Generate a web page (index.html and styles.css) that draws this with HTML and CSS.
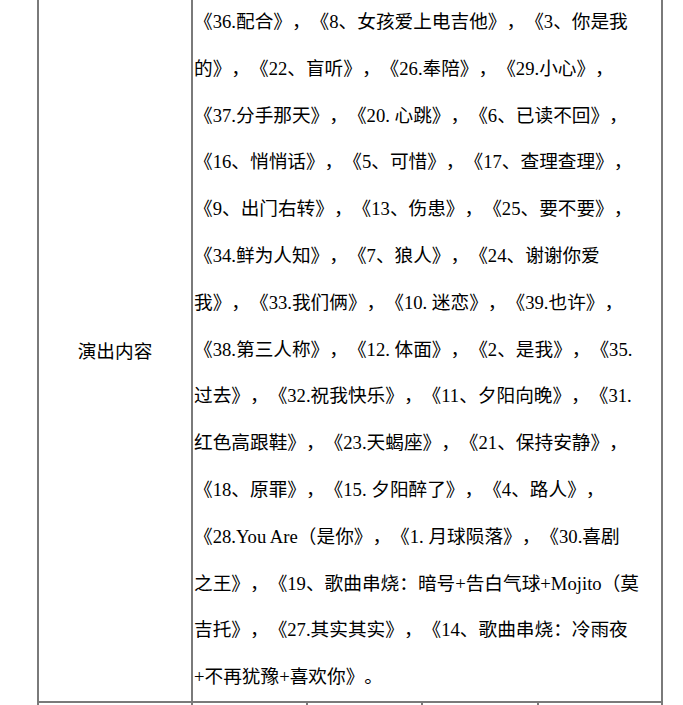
FILE: index.html
```html
<!DOCTYPE html>
<html lang="zh-CN">
<head>
<meta charset="utf-8">
<title>演出内容</title>
<link rel="stylesheet" href="styles.css">
</head>
<body>
<table class="sheet">
  <colgroup>
    <col class="c1"><col class="c2"><col class="c3"><col class="c4"><col class="c5">
  </colgroup>
  <tr>
    <td class="label">演出内容</td>
    <td class="content" colspan="4">
      <div class="ln">《36.配合》，《8、女孩爱上电吉他》，《3、你是我</div>
      <div class="ln">的》，《22、盲听》，《26.奉陪》，《29.小心》，</div>
      <div class="ln">《37.分手那天》，《20. 心跳》，《6、已读不回》，</div>
      <div class="ln">《16、悄悄话》，《5、可惜》，《17、查理查理》，</div>
      <div class="ln">《9、出门右转》，《13、伤患》，《25、要不要》，</div>
      <div class="ln">《34.鲜为人知》，《7、狼人》，《24、谢谢你爱</div>
      <div class="ln">我》，《33.我们俩》，《10. 迷恋》，《39.也许》，</div>
      <div class="ln">《38.第三人称》，《12. 体面》，《2、是我》，《35.</div>
      <div class="ln">过去》，《32.祝我快乐》，《11、夕阳向晚》，《31.</div>
      <div class="ln">红色高跟鞋》，《23.天蝎座》，《21、保持安静》，</div>
      <div class="ln">《18、原罪》，《15. 夕阳醉了》，《4、路人》，</div>
      <div class="ln">《28.You Are（是你》，《1. 月球陨落》，《30.喜剧</div>
      <div class="ln">之王》，《19、歌曲串烧：暗号+告白气球+Mojito（莫</div>
      <div class="ln">吉托》，《27.其实其实》，《14、歌曲串烧：冷雨夜</div>
      <div class="ln">+不再犹豫+喜欢你》。</div>
    </td>
  </tr>
  <tr class="next">
    <td></td><td></td><td></td><td></td><td></td>
  </tr>
</table>
</body>
</html>
```
FILE: styles.css
```css
html, body {
  margin: 0;
  padding: 0;
  background: #ffffff;
}
body {
  font-family: "Liberation Serif", "Noto Sans CJK SC", serif;
  font-size: 18.67px;
  color: #000000;
  overflow: hidden;
  text-spacing-trim: space-all;
}
.sheet {
  border-collapse: collapse;
  table-layout: fixed;
  width: 624px;
  margin: -3px 0 0 37px;
}
.c1 { width: 154px; }
.c2 { width: 115px; }
.c3 { width: 115px; }
.c4 { width: 116px; }
.c5 { width: 124px; }
.sheet td {
  border: 2px solid #7a7a7a;
  padding: 0;
}
.label {
  text-align: center;
  vertical-align: middle;
  font-family: "Noto Sans CJK SC", sans-serif;
}
.content {
  padding: 0 0 0 1px !important;
  vertical-align: top;
}
.ln {
  line-height: 46.8px;
  white-space: nowrap;
  text-spacing-trim: space-all;
}
.next td {
  height: 30px;
}
```
